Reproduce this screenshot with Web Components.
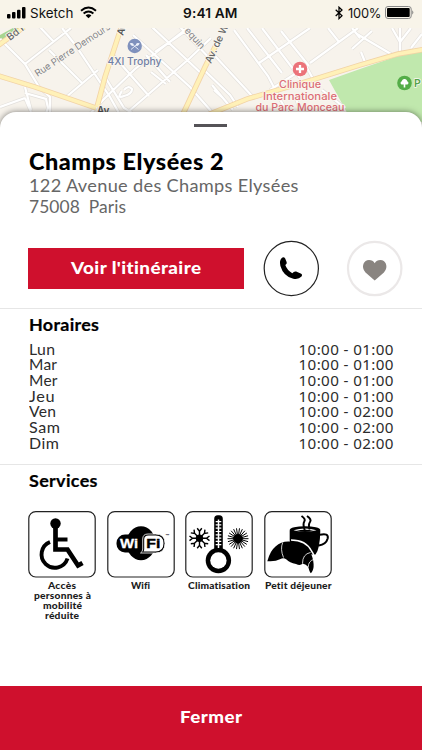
<!DOCTYPE html>
<html lang="fr">
<head>
<meta charset="utf-8">
<meta name="viewport" content="width=device-width">
<title>Champs Elysées 2</title>
<style>
html,body{margin:0;height:100%;overflow:hidden}
body{font-family:Lato,"Liberation Sans",sans-serif;font-variant-ligatures:none;color:#000;background:#f5f1e8}
</style>
</head>
<body>
<store-screen></store-screen>
<script>
const define = (name, html, setup) => customElements.define(name, class extends HTMLElement {
  connectedCallback() {
    if (this.shadowRoot) return;
    const t = document.createElement('template');
    t.innerHTML = html;
    this.attachShadow({mode: 'open'}).append(t.content.cloneNode(true));
    if (setup) setup(this, this.shadowRoot);
  }
});

/* A line of text set to a given width, partly by tracking and partly by stretching. */
define('wide-text', `<style>:host{display:inline-block;white-space:pre;vertical-align:top;text-align:left}span{display:inline-block;transform-origin:0 50%;vertical-align:top;font-variant-ligatures:none}</style><span><slot></slot></span>`, (el, root) => {
  const span = root.querySelector('span');
  const w = +el.getAttribute('w');
  const share = +(el.getAttribute('track') || .35);
  const natural = span.getBoundingClientRect().width;
  const gap = (w - natural) * share / (el.textContent.length - 1);
  const scale = w / (natural + (w - natural) * share);
  el.style.width = w + 'px';
  span.style.letterSpacing = gap + 'px';
  span.style.marginRight = -gap - 20 + 'px';
  if (share < 1) span.style.transform = `scaleX(${scale})`;
});

define('status-bar', `<style>
:host{display:grid;grid-template-columns:1fr auto 1fr;align-items:center;height:28px;padding:0 8px 0 7px;box-sizing:border-box;background:#f8f4e9;font:13.3px/24px Inter,sans-serif;color:#111}
.l,.r{display:flex;align-items:center;height:24px}.r{justify-content:flex-end}b{font-weight:600}svg{display:block;position:relative;top:-1.5px}
.l svg:first-child{margin-right:3.500px}.wifi{margin-left:7px}.r wide-text{margin:0 4px 0 5px}wide-text{position:relative;top:-1px}
</style>
<div class="l"><svg width="19" height="12"><g fill="#000"><rect x="0" y="7" width="3.5" height="4.5" rx="1"/><rect x="5" y="5" width="3.5" height="6.5" rx="1"/><rect x="10" y="2.7" width="3.5" height="8.8" rx="1"/><rect x="15" y="0" width="3.5" height="11.5" rx="1"/></g></svg><wide-text w="43.5">Sketch</wide-text>
<svg class="wifi" width="17" height="13" viewBox="0 0 17 13"><g fill="none" stroke="#000" stroke-width="2"><path d="M1 4.7Q8.5-1.6 16 4.7"/><path d="M3.6 7.6Q8.5 3.5 13.4 7.6"/></g><path d="M5.6 9.4Q8.5 7 11.4 9.4L8.5 12.3Z"/></svg></div>
<b><wide-text w="54.500">9:41 AM</wide-text></b>
<div class="r"><svg width="8" height="14" viewBox="0 0 8 14"><path d="M.7 3.8 7 9.8 4 12.6V1.2L7 4 .7 10" fill="none" stroke="#000" stroke-width="1.25"/></svg><wide-text w="33.5">100%</wide-text>
<svg width="29" height="13" viewBox="0 0 29 13"><rect x=".5" y=".5" width="25.7" height="12" rx="2.5" fill="none" stroke="#888"/><rect x="2" y="2" width="22.7" height="9" rx="1"/><path d="M27.3 4.3q2 2.2 0 4.4z" fill="#777"/></svg></div>`);

define('city-map', `<style>:host{display:block;height:94px;overflow:hidden}svg{display:block}text{font-family:Inter,sans-serif;stroke:#faf7f0;stroke-width:1.6px;paint-order:stroke;stroke-linejoin:round}</style>
<svg width="422" height="94" viewBox="0 28 422 94">
<defs>
<g id="side" fill="none">
<path d="M0 39 25 64 39 87 50 97V122M25 64 71 28M0 107 25 98M25 87 31 110M25 93 46 99 48 108 45 116M25 98 31 112M38 25 54 42M62 28 76 46 110 97 124 122M49 50 82 83M65 98 98 70M86 118 104 99 135 69 190 26M105 77 124 108 132 113M113 55 149 96M122 91Q116 99 124 96 132 94 132 89 128 85 124 90M128 112 190 58 211 38M133 35 190 87 211 111M152 27 203 75M155 52 190 28M146 55 170 82M151 72 166 84M180 27 211 60M203 69 230 95 238 107"/>
<path d="M234 30 268 76 281 101M247 28 282 73M215 56 252 96M212 85 233 110M214 90 224 99M259 63 310 28M310 63 358 28M306 66 318 88M262 28 300 78M281 31 309 66M270 90 298 72M352 49 372 31M328 28 339 42M352 28 360 38M357 34 391 54M361 52 365 62M392 28 400 42 411 28M400 28V54M411 48 422 34M295 96 300 110M322 90 345 108M281 101 293 122"/>
</g>
<g id="main" fill="none"><path d="M-4 75 35 87 96 108M121 28 105 77 97 107M-4 47 24 27M216 45 205 67 183 114M205 116 247 99 315 79 360 65 398 54 426 49"/></g>
</defs>
<rect y="28" width="422" height="94" fill="#f7f3ec"/>
<path d="M329 80 360 69 395 57 422 51V122H352L339 98Z" fill="#c0e8ad"/><path d="M0 35 13 28H24L12 38 0 45Z" fill="#a9d58f"/>
<use href="#side" stroke="#e3e0dc" stroke-width="3.5"/><use href="#side" stroke="#fff" stroke-width="2.2"/>
<use href="#main" stroke="#f2d3a6" stroke-width="5.4"/><use href="#main" stroke="#fff1b8" stroke-width="3.8"/>
<g fill="#85858a" font-size="9.6">
<text transform="translate(37.500 77) rotate(-33.500)" textLength="88">Rue Pierre Demours</text>
<text transform="translate(10 41) rotate(-38)" fill="#666" font-size="10" font-weight="500">Bd P</text>
<text transform="translate(123 36) rotate(-72)" fill="#555" font-weight="600">Av.</text>
<text x="97" y="114" fill="#555" font-size="10" font-weight="600">Av.</text>
<text transform="translate(184 31) rotate(48)">equin</text>
<text transform="translate(211 64) rotate(-65)" fill="#666" font-size="10" font-weight="500">Av. de W</text>
</g>
<g font-weight="500" text-anchor="middle"><text x="134.500" y="65.300" font-size="10.400" fill="#7180a5" textLength="54" lengthAdjust="spacingAndGlyphs">4XI Trophy</text>
<g fill="#dc6e76" font-size="10.200"><text x="300" y="88" textLength="42" lengthAdjust="spacingAndGlyphs">Clinique</text><text x="300" y="99.500" textLength="74" lengthAdjust="spacingAndGlyphs">Internationale</text><text x="300" y="111" textLength="89" lengthAdjust="spacingAndGlyphs">du Parc Monceau</text></g></g>
<circle cx="134.700" cy="46" r="7.200" fill="#7f91bd"/><path d="M131 49.500 138 43.500M138.500 49.500 131.500 43.500" stroke="#edf1fa" stroke-width=".9"/><path d="M129.800 43.300q3.700-1 4 2-2.500 2-4-2M139.700 43.300q-3.700-1-4 2 2.500 2 4-2" fill="#edf1fa"/>
<circle cx="300" cy="69" r="7.300" fill="#eb737a"/><path d="M300 65V73M296 69H304" stroke="#fff" stroke-width="2.300"/>
<circle cx="404.500" cy="83" r="7.300" fill="#54ad48"/><path d="M403.700 87.500V84.500H401.500q-2-1.500 0-3 1-3 3-2.500 2-.500 3 2.500 2 1.500 0 3H405.300V87.500Z" fill="#fff"/>
<text x="414" y="86.500" font-size="10.500" font-weight="600" fill="#54a34a">P</text>
</svg>`);

define('bottom-sheet', `<style>
:host{display:flex;flex-direction:column;position:relative;margin-top:-10px;background:#fff;border-radius:16px 16px 0 0;box-shadow:0 0 6px rgba(0,0,0,.5);flex:1;min-height:0}
.h{width:33px;height:3px;background:#555357;margin:12px auto 0;position:relative;left:-.5px}
</style><div class="h"></div><slot></slot>`);

define('store-heading', `<style>:host{display:block;padding:22px 28.500px 0}h1{margin:0;font-size:21.800px;line-height:26px;font-weight:900}p{margin:0 0 0 .5px;font-size:17.200px;line-height:21.200px;color:#666}</style>
<h1><wide-text w="194.500">Champs Elysées 2</wide-text></h1><p><wide-text w="269.500">122 Avenue des Champs Elysées</wide-text></p><p><wide-text w="97">75008  Paris</wide-text></p>`);

define('action-row', `<style>:host{display:flex;align-items:center;padding:0 19px 0 28px;height:58px;margin-top:22.500px}
button{border:0;padding:0 0 2px;background:#cf102d;color:#fff;width:216px;height:41px;font:900 17.300px/38px Lato,sans-serif}
svg{display:block}.p{margin-left:19px}.f{margin-left:26px}</style>
<button><wide-text w="130">Voir l'itinéraire</wide-text></button>
<svg class="p" width="57" height="57" viewBox="0 0 57 57"><circle cx="28.300" cy="28.500" r="27.100" fill="#fff" stroke="#222" stroke-width="1.200"/><path d="M18.500 18.300q2.200-2 3.700.3l1.500 3.600q.5 1.700-1.400 2.900 1.700 5.200 7 8.200 2-2.500 3.800-1.700l4.600 2q2.200 1.100.8 3-2.900 3.300-8.200 2.200Q20.500 36.500 17.400 26q-1.300-5.300 1.100-7.700Z"/></svg>
<svg class="f" width="57" height="57" viewBox="0 0 57 57"><circle cx="28.700" cy="28.500" r="26.700" fill="#fff" stroke="#ebe8e8" stroke-width="2.200"/><path d="M28.700 40.400 19.500 32.500Q15.800 28.500 17.500 23.800 19 20 23 20q3.900 0 5.700 3.300Q30.500 20 34.400 20q4 0 5.500 3.800 1.700 4.700-2 8.700Z" fill="#898480"/></svg>`);

define('sheet-section', `<style>:host{display:block;border-top:1px solid #e6e6e6;padding:0 28.500px}h2{margin:0;font-size:17px;line-height:20px;font-weight:700;-webkit-text-stroke:.2px #000}</style><h2></h2><slot></slot>`, (el, root) => {
  root.querySelector('h2').innerHTML = `<wide-text w="${el.getAttribute('w')}">${el.getAttribute('heading')}</wide-text>`;
});

define('opening-row', `<style>:host{display:flex;justify-content:space-between;height:15.700px;line-height:15.700px;font-size:15px;color:#2c2c2c}.t{font-family:"Noto Sans",sans-serif;font-size:15.200px}</style><span class="d"></span><span class="t"></span>`, (el, root) => {
  root.querySelector('.d').innerHTML = `<wide-text w="${el.getAttribute('w')}">${el.getAttribute('day')}</wide-text>`;
  root.querySelector('.t').innerHTML = `<wide-text w="95" track="1">${el.getAttribute('hours')}</wide-text>`;
});

const rays = (n, cx, cy, a, b) => Array.from({length: n}, (_, i) => {
  const t = i * 2 * Math.PI / n, c = Math.cos(t), s = Math.sin(t);
  return `M${cx + a * c} ${cy + a * s}L${cx + b * c} ${cy + b * s}`;
}).join('');
const flake = Array.from({length: 8}, (_, i) => `<path transform="rotate(${i * 45} 14.500 27.300)" d="M14.500 27V19.500M12.200 17.300 14.500 20.300 16.800 17.300"/>`).join('');
const glyphs = {
  access: `<circle cx="27.500" cy="12.500" r="5.200"/><path d="M27.500 17V38.500H39.500L50 54.500 54.500 52" fill="none" stroke="#000" stroke-width="4.700" stroke-linejoin="miter"/><path d="M27 28.500H39.500" stroke="#000" stroke-width="4"/><path d="M22 31A13.300 13.300 0 1 0 39.500 47.500" fill="none" stroke="#000" stroke-width="3.900"/>`,
  wifi: `<ellipse cx="34" cy="32.300" rx="14.500" ry="17"/><rect x="9.500" y="23.500" width="32" height="18" rx="8.500"/><path d="M41 23H48.500Q58 23 58 32.300 58 42 48.500 42H33.500Q35.700 41 35.700 38V28Q35.700 23 41 23Z" stroke="#fff" stroke-width=".8"/><path d="M41.500 24.600H48.500Q56.500 24.600 56.500 32.300 56.500 40.500 48.500 40.500H36.500Q37.200 39.500 37.200 38V28.500Q37.200 24.600 41.500 24.600Z" fill="#fff"/><g font-family="Liberation Sans,sans-serif" font-weight="700" font-size="13.500"><text x="13" y="37.300" fill="#fff" stroke="#fff" stroke-width=".3" textLength="18" lengthAdjust="spacingAndGlyphs">Wi</text><text x="39.300" y="37.300" stroke="#000" stroke-width=".4" textLength="14" lengthAdjust="spacingAndGlyphs">Fi</text></g><text x="58.500" y="25.500" font-size="4" font-family="Liberation Sans,sans-serif">™</text>`,
  climate: `<rect x="29.200" y="4.300" width="8.600" height="43" rx="3.500"/><circle cx="33.400" cy="49.500" r="12.700"/><circle cx="33.400" cy="49.500" r="8.200" fill="#fff"/><path d="M33.500 8.500V37" stroke="#fff" stroke-width="1.500"/><path d="M33.500 10V36.500" stroke="#fff" stroke-width="5.600" stroke-dasharray="1.200 2.100"/><g fill="none" stroke="#000" stroke-width="1.400">${flake}</g><circle cx="14.500" cy="27.300" r="3.700"/><circle cx="53" cy="27.700" r="4.800"/><path d="${rays(22, 53, 27.700, 4, 10.500)}" stroke="#000" stroke-width="1"/>`,
  breakfast: `<path d="M25.700 19.500V29Q26 41 40 43.500H51.500Q56 38 56.300 19.500Z"/><ellipse cx="41" cy="19" rx="15.300" ry="3.800"/><path d="M29.500 19.200Q41 15.800 52.500 19.200 41 22.200 29.500 19.200Z" fill="#fff"/><path d="M32 19.900Q41 17.800 50 19.900 41 22 32 19.900Z"/><path d="M55.500 23.800Q65 21.500 63.700 27.500 62 33.500 54.800 34.500" fill="none" stroke="#000" stroke-width="2"/><path d="M37.500 5q4.500 3 2.800 5.500t.4 8.500M43 5q5 3.500 3 6t-.3 7.500" fill="none" stroke="#000" stroke-width="2"/><path d="M3.300 50.200Q6 40 11.500 35.500 17 30.500 24 30.500 39 30 44.500 39.500 49 44 49.600 53 50 59 47 62.200 45.800 62 44.300 56 42 53 38.700 52.500 36.500 55 32 53 25.500 51.500 22.500 48.500 19.500 46.500 16.500 48 11 51 3.300 50.200Z"/><path d="M27 29Q42 29 47.500 40 51.500 45 51.200 54" fill="none" stroke="#fff" stroke-width="1.500"/><path d="M18.700 31.500Q16 38 19.500 46.500M46.500 41.500Q38.500 43 38.500 52.500M49.500 48.500Q44.500 50 44.200 56" fill="none" stroke="#fff" stroke-width=".8"/>`
};

define('service-tile', `<style>:host{display:block;width:68px;text-align:center;font-size:9.600px;line-height:10.100px;font-weight:900;color:#1c1c1c}svg{display:block;margin-bottom:3px}.lab{display:flex;flex-direction:column;align-items:center}</style><svg width="68" height="67" viewBox="0 0 68 67"></svg><div class="lab"></div>`, (el, root) => {
  root.querySelector('svg').innerHTML = '<rect x=".8" y=".6" width="66.400" height="65.400" rx="7" fill="#fff" stroke="#222" stroke-width="1.200"/>' + glyphs[el.getAttribute('kind')];
  root.querySelector('.lab').innerHTML = el.getAttribute('label').split('|').map(p => {
    const [text, w] = p.split(':');
    return `<wide-text w="${w}">${text}</wide-text>`;
  }).join('');
});

define('close-bar', `<style>:host{display:block;background:#cf102d;height:64px;flex:none;margin-top:auto}button{display:block;width:100%;height:64px;border:0;padding:0 0 3px;background:none;color:#fff;font:900 17.500px/24px Lato,sans-serif}</style><button></button>`, (el, root) => {
  root.querySelector('button').innerHTML = `<wide-text w="62">${el.getAttribute('label')}</wide-text>`;
});

define('store-screen', `<style>:host{display:flex;flex-direction:column;width:422px;height:750px;overflow:hidden}
.hours{margin-top:10.500px;height:148.500px;padding-top:6px}.list{padding-top:6.300px}.services{padding-top:6px}.tiles{display:flex;gap:10.700px;padding-top:20px;margin-left:-.5px}</style>
<status-bar></status-bar><city-map></city-map>
<bottom-sheet>
<store-heading></store-heading><action-row></action-row>
<sheet-section class="hours" heading="Horaires" w="70"><div class="list">
<opening-row day="Lun" w="26" hours="10:00 - 01:00"></opening-row>
<opening-row day="Mar" w="28" hours="10:00 - 01:00"></opening-row>
<opening-row day="Mer" w="28.500" hours="10:00 - 01:00"></opening-row>
<opening-row day="Jeu" w="25.500" hours="10:00 - 01:00"></opening-row>
<opening-row day="Ven" w="27" hours="10:00 - 02:00"></opening-row>
<opening-row day="Sam" w="31" hours="10:00 - 02:00"></opening-row>
<opening-row day="Dim" w="30" hours="10:00 - 02:00"></opening-row>
</div></sheet-section>
<sheet-section class="services" heading="Services" w="68.500"><div class="tiles">
<service-tile kind="access" label="Accès:28|personnes à:57|mobilité:39|réduite:34"></service-tile>
<service-tile kind="wifi" label="Wifi:19"></service-tile>
<service-tile kind="climate" label="Climatisation:62"></service-tile>
<service-tile kind="breakfast" label="Petit déjeuner:66.500"></service-tile>
</div></sheet-section>
<close-bar label="Fermer"></close-bar>
</bottom-sheet>`);
</script>
</body>
</html>
